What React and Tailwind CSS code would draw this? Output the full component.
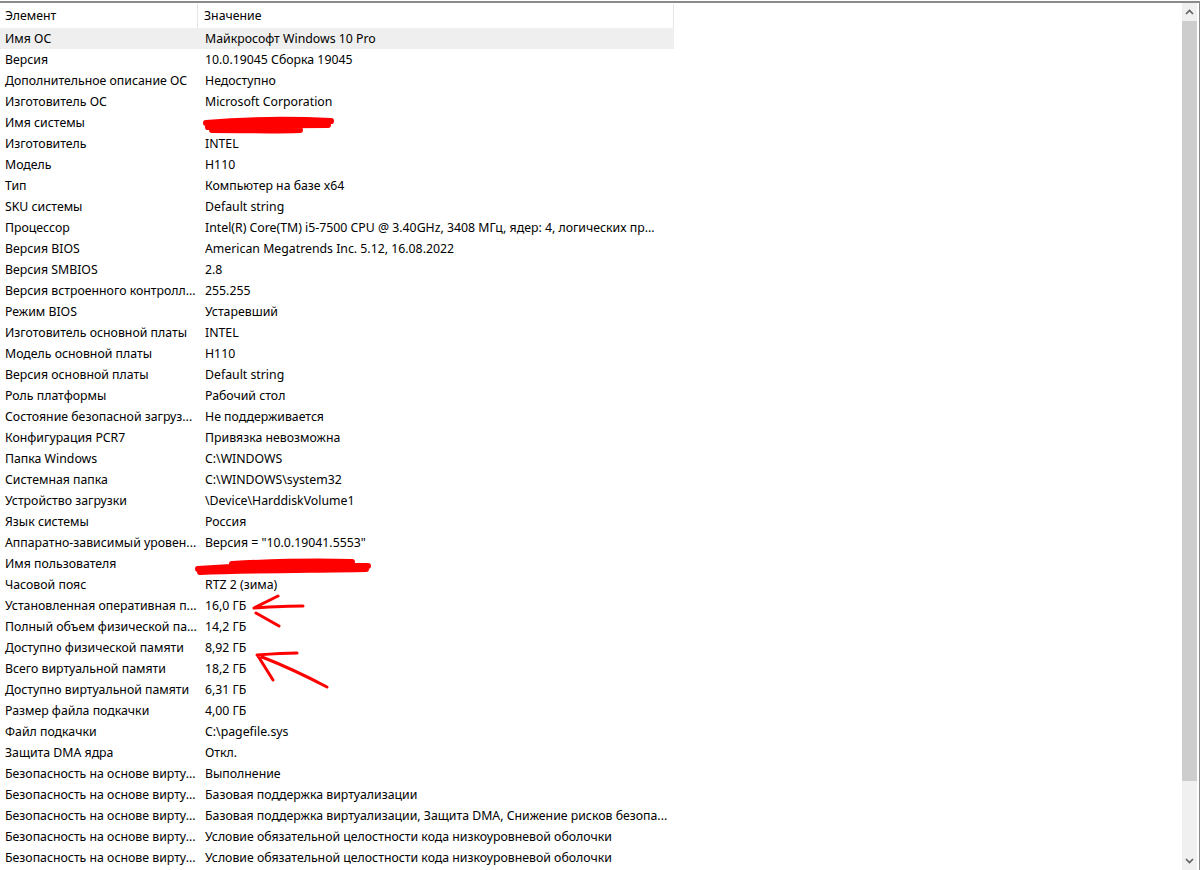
import React from 'react';

const rows = [
  ['Имя ОС', 'Майкрософт Windows 10 Pro'],
  ['Версия', '10.0.19045 Сборка 19045'],
  ['Дополнительное описание ОС', 'Недоступно'],
  ['Изготовитель ОС', 'Microsoft Corporation'],
  ['Имя системы', ''],
  ['Изготовитель', 'INTEL'],
  ['Модель', 'H110'],
  ['Тип', 'Компьютер на базе x64'],
  ['SKU системы', 'Default string'],
  ['Процессор', 'Intel(R) Core(TM) i5-7500 CPU @ 3.40GHz, 3408 МГц, ядер: 4, логических пр...'],
  ['Версия BIOS', 'American Megatrends Inc. 5.12, 16.08.2022'],
  ['Версия SMBIOS', '2.8'],
  ['Версия встроенного контролл...', '255.255'],
  ['Режим BIOS', 'Устаревший'],
  ['Изготовитель основной платы', 'INTEL'],
  ['Модель основной платы', 'H110'],
  ['Версия основной платы', 'Default string'],
  ['Роль платформы', 'Рабочий стол'],
  ['Состояние безопасной загруз...', 'Не поддерживается'],
  ['Конфигурация PCR7', 'Привязка невозможна'],
  ['Папка Windows', 'C:\\WINDOWS'],
  ['Системная папка', 'C:\\WINDOWS\\system32'],
  ['Устройство загрузки', '\\Device\\HarddiskVolume1'],
  ['Язык системы', 'Россия'],
  ['Аппаратно-зависимый уровен...', 'Версия = "10.0.19041.5553"'],
  ['Имя пользователя', ''],
  ['Часовой пояс', 'RTZ 2 (зима)'],
  ['Установленная оперативная п...', '16,0 ГБ'],
  ['Полный объем физической па...', '14,2 ГБ'],
  ['Доступно физической памяти', '8,92 ГБ'],
  ['Всего виртуальной памяти', '18,2 ГБ'],
  ['Доступно виртуальной памяти', '6,31 ГБ'],
  ['Размер файла подкачки', '4,00 ГБ'],
  ['Файл подкачки', 'C:\\pagefile.sys'],
  ['Защита DMA ядра', 'Откл.'],
  ['Безопасность на основе вирту...', 'Выполнение'],
  ['Безопасность на основе вирту...', 'Базовая поддержка виртуализации'],
  ['Безопасность на основе вирту...', 'Базовая поддержка виртуализации, Защита DMA, Снижение рисков безопа...'],
  ['Безопасность на основе вирту...', 'Условие обязательной целостности кода низкоуровневой оболочки'],
  ['Безопасность на основе вирту...', 'Условие обязательной целостности кода низкоуровневой оболочки'],
];

const Scribbles = () => (
  <svg className="absolute left-0 top-0 pointer-events-none" width="1182" height="870">
    <g fill="none" stroke="#ff0000" strokeLinecap="round" strokeLinejoin="round">
      <path d="M206 120 C240 117 290 116 331 118 M208 124 C250 122 300 122 328 122 M212 127 C240 127 270 128 300 127" strokeWidth="6" />
      <path d="M198 566 C240 563 300 561 368 563 M200 569 C250 567 310 567 366 566 M232 561 C270 559 320 558 352 559" strokeWidth="6" />
      <path d="M254 605 C270 604 288 603 303 603 M254 605 L278 593 M256 610 L279 623" strokeWidth="3" />
      <path d="M257 652 C270 651 285 650 297 650 M258 653 L273 677 M262 654 C285 663 308 674 327 684" strokeWidth="3" />
    </g>
  </svg>
);

export default function App() {
  return (
    <div
      className="w-[1201px] h-[870px] bg-white pt-px overflow-hidden text-[12.3px] text-black"
      style={{ fontFamily: '"Noto Sans", "Open Sans", sans-serif' }}
    >
      <div className="h-[869px] flex border-t-2 border-r border-[#8a8a8a] mr-px">
        <div className="relative flex-1 flex flex-col">
          <div className="flex h-[25px] items-center">
            <div className="w-[198px] h-[24px] flex items-center pt-[2px] pl-[5px] border-r border-[#e5e5e5]">Элемент</div>
            <div className="w-[476px] h-[24px] flex items-center pt-[2px] pl-[6px] border-r border-[#e5e5e5]">Значение</div>
          </div>
          {rows.map(([k, v], i) => (
            <div
              key={i}
              className={`flex h-[21px] pt-[2px] items-center w-[674px] whitespace-nowrap ${i === 0 ? 'bg-[#efefef]' : ''}`}
            >
              <div className="w-[200px] pl-[5px] overflow-hidden">{k}</div>
              <div className="w-[474px] pl-[5px] overflow-hidden">{v}</div>
            </div>
          ))}
          <Scribbles />
        </div>
        <div className="w-[15px] mr-[2px] flex flex-col bg-[#f0f0f0]">
          <div className="h-[18px] flex items-center justify-center">
            <svg width="9" height="6" viewBox="0 0 9 6">
              <path d="M1 5 L4.5 1.5 L8 5" fill="none" stroke="#606060" strokeWidth="1.6" />
            </svg>
          </div>
          <div className="h-[760px] bg-[#cdcdcd]" />
          <div className="flex-1" />
          <div className="h-[18px] flex items-center justify-center">
            <svg width="9" height="6" viewBox="0 0 9 6">
              <path d="M1 1 L4.5 4.5 L8 1" fill="none" stroke="#606060" strokeWidth="1.6" />
            </svg>
          </div>
        </div>
      </div>
    </div>
  );
}
